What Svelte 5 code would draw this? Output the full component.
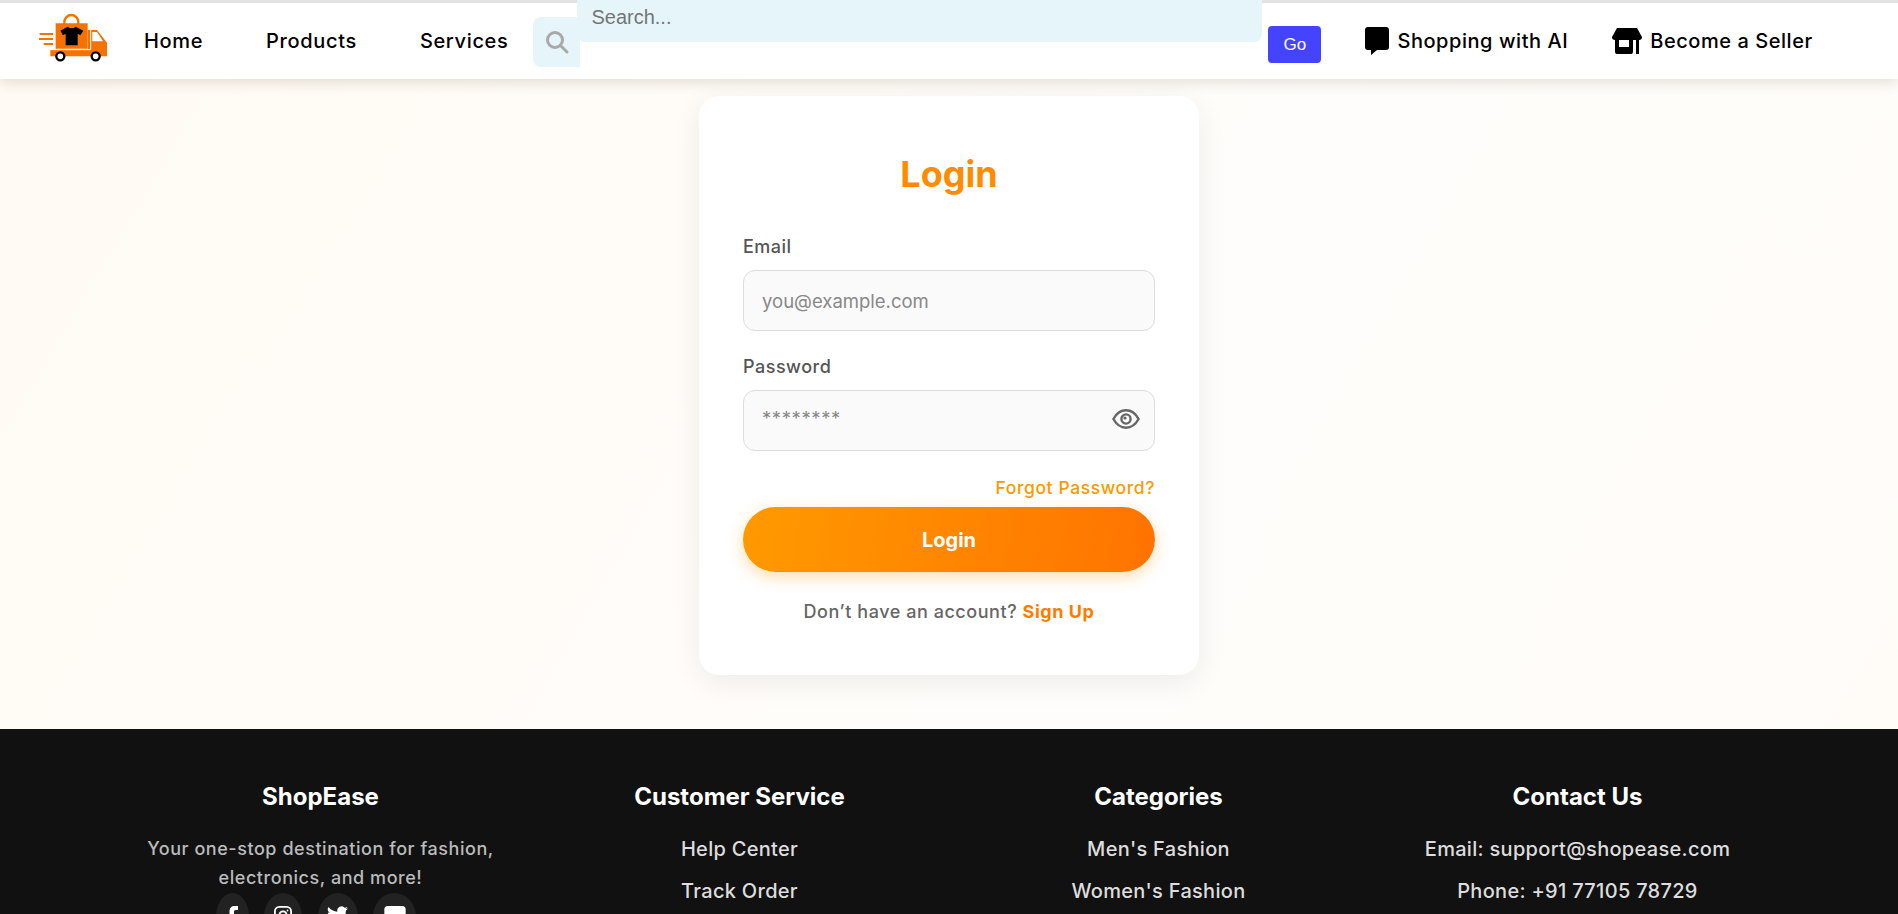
<script>
  const navLinks = ['Home', 'Products', 'Services'];
  const footerCols = [
    { title: 'Customer Service', links: ['Help Center', 'Track Order'] },
    { title: 'Categories', links: ["Men's Fashion", "Women's Fashion"] },
    { title: 'Contact Us', links: ['Email: support@shopease.com', 'Phone: +91 77105 78729'] }
  ];
</script>

<div class="page">
  <header class="nav">
    <svg class="logo" viewBox="55 35 210 150" aria-label="ShopEase logo">
      <path d="M134 68 v-6 a21 21 0 0 1 42 0 v6" fill="none" stroke="#f57200" stroke-width="7"/>
      <path d="M108 66 H204 V142 H108 Z" fill="#f57200"/>
      <path d="M60 98 H100 M58 113 H100 M72 128 H100" stroke="#f57200" stroke-width="6" fill="none"/>
      <path d="M92 146 H205 V86 H232 L262 124 V165 H92 Z" fill="#f57200"/>
      <path d="M93 145 H213 V84" fill="none" stroke="#fff" stroke-width="3"/>
      <path d="M218 92 H232 L250 120 H218 Z" fill="#fff"/>
      <path d="M144 76 L122 88 L130 102 L138 97 V132 H174 V97 L182 102 L191 88 L168 76 Q156 86 144 76 Z" fill="#000"/>
      <circle cx="122" cy="165" r="12" fill="#fff" stroke="#000" stroke-width="7"/>
      <circle cx="228" cy="165" r="12" fill="#fff" stroke="#000" stroke-width="7"/>
    </svg>

    <nav class="links">
      {#each navLinks as link}
        <a href="#top" class="navlink">{link}</a>
      {/each}
    </nav>

    <form class="search" onsubmit={(e) => e.preventDefault()}>
      <span class="search-icon">
        <svg viewBox="0 0 24 24" width="24" height="24" fill="none" stroke="#a9a9a9" stroke-width="3">
          <circle cx="10" cy="10" r="7.5"/>
          <path d="M15.5 15.5 L22 22" stroke-linecap="round"/>
        </svg>
      </span>
      <input class="search-input" placeholder="Search..." />
      <button class="go" type="submit">Go</button>
    </form>

    <a href="#top" class="action ai">
      <svg viewBox="0 0 24 28" width="24" height="28" fill="#000">
        <path d="M3 0 H21 A3 3 0 0 1 24 3 V20 A3 3 0 0 1 21 23 H12 L6 28 V23 H3 A3 3 0 0 1 0 20 V3 A3 3 0 0 1 3 0 Z"/>
      </svg>
      Shopping with AI
    </a>
    <a href="#top" class="action seller">
      <svg viewBox="0 0 30 26" width="30" height="26" fill="#000">
        <path d="M5 0 H25 L30 9 A3 3 0 0 1 27 12 H3 A3 3 0 0 1 0 9 Z"/>
        <path d="M3 12 H7 V19 H17 V12 H21 V24 A2 2 0 0 1 19 26 H5 A2 2 0 0 1 3 24 Z"/>
        <rect x="24" y="12" width="3" height="14"/>
      </svg>
      Become a Seller
    </a>
  </header>

  <main class="main">
    <form class="card" onsubmit={(e) => e.preventDefault()}>
      <h1>Login</h1>
      <label class="label" for="email">Email</label>
      <input id="email" class="field" type="text" placeholder="you@example.com" />
      <label class="label pw" for="password">Password</label>
      <div class="pw-wrap">
        <input id="password" class="field stars" type="text" placeholder="********" />
        <svg class="eye" viewBox="0 0 28 20" width="28" height="20" fill="none" stroke="#666" stroke-width="2.4">
          <path d="M1.4 10 C5 3.5 9.5 1.3 14 1.3 S23 3.5 26.6 10 C23 16.5 18.500 18.700 14 18.700 S5 16.500 1.400 10 Z"/>
          <circle cx="14" cy="10" r="4.600"/>
          <circle cx="13" cy="9" r="1.600" fill="#666" stroke="none"/>
        </svg>
      </div>
      <a href="#top" class="forgot">Forgot Password?</a>
      <button class="submit" type="submit">Login</button>
      <p class="signup">Don’t have an account? <a href="#top">Sign Up</a></p>
    </form>
  </main>

  <footer class="footer">
    <div class="col">
      <h3>ShopEase</h3>
      <p class="about">Your one-stop destination for fashion, electronics, and more!</p>
      <div class="social">
        <a href="#top" class="s s1" aria-label="Facebook">
          <svg viewBox="0 0 12 24" width="12" height="24" fill="#fff"><path d="M3.500 24 V13 H0 V8.500 H3.500 V5.500 C3.500 2 5.500 0 8.700 0 H12 V4 H9.800 C8.400 4 8 4.800 8 6 V8.500 H12 L11.300 13 H8 V24 Z"/></svg>
        </a>
        <a href="#top" class="s s2" aria-label="Instagram">
          <svg viewBox="0 0 20 20" width="18" height="18" fill="none" stroke="#fff" stroke-width="2"><rect x="1" y="1" width="18" height="18" rx="5"/><circle cx="10" cy="10" r="4"/><circle cx="15" cy="5" r="1" fill="#fff" stroke="none"/></svg>
        </a>
        <a href="#top" class="s s3" aria-label="Twitter">
          <svg viewBox="0 0 24 20" width="21" height="18" fill="#fff"><path d="M24 2.400 a10 10 0 0 1-2.800.8 5 5 0 0 0 2.200-2.700 10 10 0 0 1-3.100 1.200 4.900 4.900 0 0 0-8.400 4.500 A14 14 0 0 1 1.700.9 a4.900 4.900 0 0 0 1.500 6.600 5 5 0 0 1-2.200-.6 c0 2.400 1.700 4.400 3.900 4.900 a5 5 0 0 1-2.200.1 4.900 4.900 0 0 0 4.600 3.400 A9.900 9.900 0 0 1 0 17.300 14 14 0 0 0 21.500 5 10 10 0 0 0 24 2.400 Z"/></svg>
        </a>
        <a href="#top" class="s s4" aria-label="YouTube">
          <svg viewBox="0 0 24 18" width="22" height="16" fill="#fff"><path d="M4 0 H20 A4 4 0 0 1 24 4 V14 A4 4 0 0 1 20 18 H4 A4 4 0 0 1 0 14 V4 A4 4 0 0 1 4 0 Z"/></svg>
        </a>
      </div>
    </div>
    {#each footerCols as col}
      <div class="col">
        <h3>{col.title}</h3>
        <ul>
          {#each col.links as link}
            <li>{link}</li>
          {/each}
        </ul>
      </div>
    {/each}
  </footer>
</div>

<style>
  :global(body) {
    margin: 0;
    background: #fff;
  }
  .page {
    height: 914px;
    overflow: hidden;
    display: flex;
    flex-direction: column;
    font-family: Inter, "Noto Sans", sans-serif;
  }
  a {
    text-decoration: none;
    color: inherit;
  }
  .nav {
    flex: none;
    height: 76px;
    border-top: 3px solid #e2e2e2;
    background: #fff;
    box-shadow: 0 4px 12px rgba(70, 50, 20, 0.14);
    display: flex;
    align-items: center;
    padding-left: 38px;
    position: relative;
    z-index: 2;
    box-sizing: content-box;
  }
  .logo {
    width: 70px;
    height: 50px;
    flex: none;
    margin-top: -6px;
  }
  .links {
    display: flex;
    gap: 63px;
    margin-left: 36px;
  }
  .navlink {
    font-size: 20px;
    font-weight: 500;
    letter-spacing: 0.65px;
    color: #000;
  }
  .search {
    display: flex;
    align-items: center;
    margin-left: 25px;
    height: 76px;
  }
  .search-icon {
    width: 47px;
    height: 50px;
    box-sizing: border-box;
    padding-left: 12px;
    margin-top: 2px;
    background: #e6f5f9;
    border-radius: 8px 0 0 8px;
    display: flex;
    align-items: center;
  }
  .search-input {
    width: 685px;
    height: 50px;
    box-sizing: border-box;
    margin-left: -3px;
    margin-top: -48px;
    border: 0;
    border-radius: 8px;
    background: #e6f5f9;
    padding: 0 14px;
    font: 20px "Liberation Sans", Arial, sans-serif;
    position: relative;
    outline: none;
  }
  .search-input::placeholder {
    color: #757575;
    opacity: 1;
  }
  .go {
    width: 53px;
    height: 37px;
    margin-left: 6px;
    margin-top: 7px;
    border: 0;
    border-radius: 4px;
    background: #4444ff;
    color: #fff;
    font: 17px "Liberation Sans", Arial, sans-serif;
    padding: 0;
  }
  .action {
    display: flex;
    align-items: center;
    gap: 8px;
    font-size: 20px;
    font-weight: 500;
    letter-spacing: 0.55px;
    color: #000;
    white-space: nowrap;
  }
  .ai {
    margin-left: 44px;
  }
  .seller {
    margin-left: 44px;
  }
  .main {
    flex: none;
    height: 650px;
    box-sizing: border-box;
    padding-top: 17px;
    background: linear-gradient(120deg, #fffaf3, #fffdfb 60%, #fffcf8);
    display: flex;
    justify-content: center;
    align-items: flex-start;
  }
  .card {
    width: 500px;
    height: 579px;
    box-sizing: border-box;
    padding: 50px 44px 0;
    background: #fff;
    border-radius: 20px;
    box-shadow: 0 8px 30px rgba(0, 0, 0, 0.07);
    display: flex;
    flex-direction: column;
  }
  h1 {
    margin: 0 0 31px;
    text-align: center;
    font-size: 36px;
    line-height: 56px;
    font-weight: 700;
    color: #ff8c00;
  }
  .label {
    font-size: 18px;
    font-weight: 500;
    line-height: 28px;
    color: #555;
    margin-bottom: 9px;
    letter-spacing: 0.5px;
  }
  .label.pw {
    margin-top: 22px;
  }
  .field {
    width: 100%;
    height: 61px;
    box-sizing: border-box;
    border: 1px solid #ddd;
    border-radius: 12px;
    background: #fafafa;
    padding: 0 18px;
    font: 18.500px Inter, sans-serif;
    outline: none;
  }
  .field::placeholder {
    color: #888;
    opacity: 1;
  }
  .pw-wrap {
    position: relative;
  }
  .stars {
    padding-bottom: 6px;
    letter-spacing: 0.6px;
  }
  .eye {
    position: absolute;
    right: 15px;
    top: 19px;
  }
  .forgot {
    align-self: flex-end;
    margin-top: 24px;
    font-size: 17.500px;
    font-weight: 500;
    line-height: 26px;
    color: #ff9800;
    letter-spacing: 0.6px;
  }
  .submit {
    margin-top: 6px;
    height: 65px;
    border: 0;
    border-radius: 33px;
    background: linear-gradient(100deg, #ff9a00, #ff7300);
    box-shadow: 0 5px 16px rgba(255, 150, 0, 0.32);
    color: #fff;
    font: 700 20px Inter, sans-serif;
  }
  .signup {
    margin: 26px 0 0;
    text-align: center;
    font-size: 18px;
    font-weight: 500;
    line-height: 28px;
    color: #666;
    letter-spacing: 0.55px;
  }
  .signup a {
    color: #ff7b00;
    font-weight: 700;
  }
  .footer {
    flex: 1;
    min-height: 0;
    background: #111;
    padding: 51px 111px 0;
    display: grid;
    grid-template-columns: repeat(4, 1fr);
    color: #fff;
    text-align: center;
    align-content: start;
  }
  h3 {
    margin: 0 0 20px;
    font-size: 24px;
    line-height: 34px;
    font-weight: 700;
    color: #fff;
  }
  .about {
    max-width: 372px;
    margin: 0 auto;
    font-size: 18px;
    line-height: 29px;
    font-weight: 500;
    color: #bbb;
    letter-spacing: 0.55px;
  }
  .social {
    display: flex;
    justify-content: center;
    gap: 15.500px;
    padding-right: 9px;
    margin-top: 1px;
  }
  .s {
    height: 48px;
    border-radius: 50%;
    background: #222;
    display: flex;
    align-items: flex-start;
    justify-content: center;
    padding-top: 13px;
    box-sizing: border-box;
  }
  .s1 { width: 33px; }
  .s2 { width: 38px; }
  .s3 { width: 40px; }
  .s4 { width: 43px; }
  ul {
    list-style: none;
    margin: 0;
    padding: 0;
  }
  li {
    font-size: 20px;
    font-weight: 500;
    line-height: 30px;
    margin-bottom: 12px;
    color: #ddd;
    letter-spacing: 0.3px;
  }
</style>
